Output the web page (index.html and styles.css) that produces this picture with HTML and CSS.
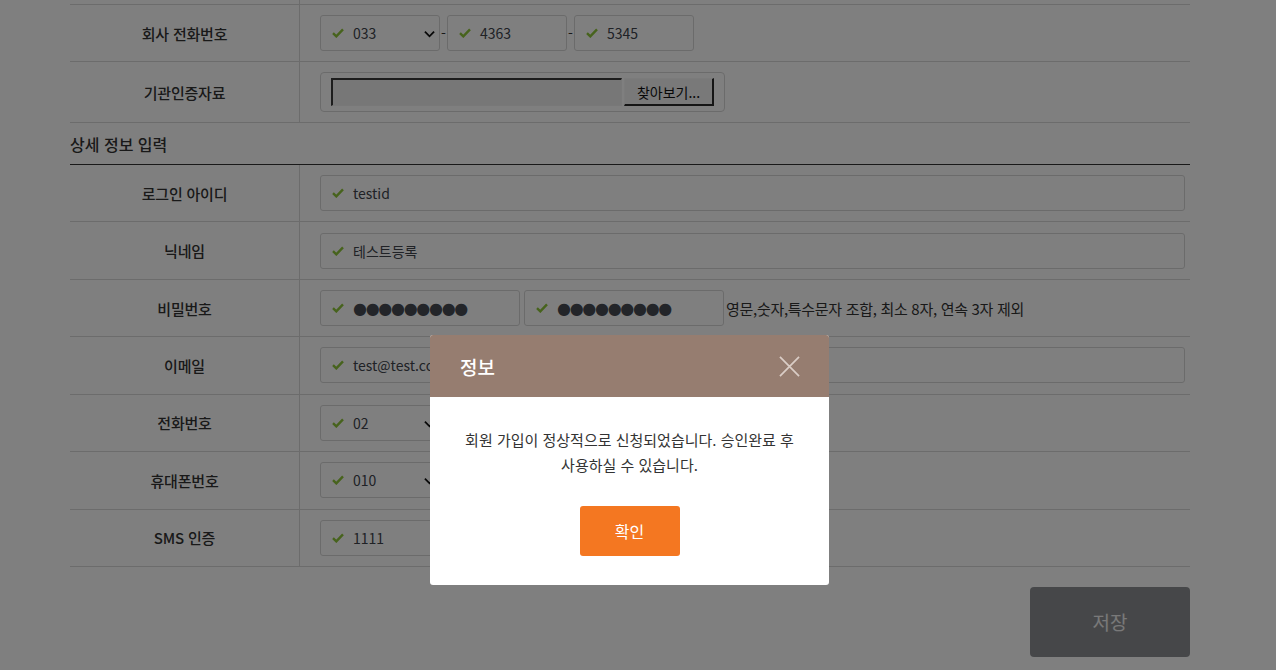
FILE: index.html
```html
<!DOCTYPE html>
<html lang="ko">
<head>
<meta charset="utf-8">
<title>회원가입</title>
<link rel="stylesheet" href="styles.css">
</head>
<body>
<div class="page">
  <div class="form">
    <div class="row row-top"><div class="label"></div><div class="cell"></div></div>

    <div class="row row-a">
      <div class="label">회사 전화번호</div>
      <div class="cell">
        <div class="field sel w120"><svg class="chk" viewBox="0 0 12 10"><path d="M1 5.2 L4.3 8.4 L11 1.4" /></svg><span>033</span><svg class="chev" viewBox="0 0 12 8"><path d="M1 1.5 L6 6.5 L11 1.5"/></svg></div>
        <span class="dash">-</span>
        <div class="field w120"><svg class="chk" viewBox="0 0 12 10"><path d="M1 5.2 L4.3 8.4 L11 1.4" /></svg><span>4363</span></div>
        <span class="dash">-</span>
        <div class="field w120"><svg class="chk" viewBox="0 0 12 10"><path d="M1 5.2 L4.3 8.4 L11 1.4" /></svg><span>5345</span></div>
      </div>
    </div>

    <div class="row row-file">
      <div class="label">기관인증자료</div>
      <div class="cell">
        <div class="filebox">
          <span class="filetext"></span>
          <span class="filebtn">찾아보기...</span>
        </div>
      </div>
    </div>

    <div class="section-title">상세 정보 입력</div>

    <div class="row">
      <div class="label">로그인 아이디</div>
      <div class="cell"><div class="field full"><svg class="chk" viewBox="0 0 12 10"><path d="M1 5.2 L4.3 8.4 L11 1.4" /></svg><span>testid</span></div></div>
    </div>
    <div class="row">
      <div class="label">닉네임</div>
      <div class="cell"><div class="field full"><svg class="chk" viewBox="0 0 12 10"><path d="M1 5.2 L4.3 8.4 L11 1.4" /></svg><span>테스트등록</span></div></div>
    </div>
    <div class="row">
      <div class="label">비밀번호</div>
      <div class="cell">
        <div class="field w200"><svg class="chk" viewBox="0 0 12 10"><path d="M1 5.2 L4.3 8.4 L11 1.4" /></svg><span class="dots">●●●●●●●●●</span></div>
        <div class="field w200 ml4"><svg class="chk" viewBox="0 0 12 10"><path d="M1 5.2 L4.3 8.4 L11 1.4" /></svg><span class="dots">●●●●●●●●●</span></div>
        <span class="hint">영문,숫자,특수문자 조합, 최소 8자, 연속 3자 제외</span>
      </div>
    </div>
    <div class="row">
      <div class="label">이메일</div>
      <div class="cell"><div class="field full"><svg class="chk" viewBox="0 0 12 10"><path d="M1 5.2 L4.3 8.4 L11 1.4" /></svg><span>test@test.com</span></div></div>
    </div>
    <div class="row">
      <div class="label">전화번호</div>
      <div class="cell">
        <div class="field sel w120"><svg class="chk" viewBox="0 0 12 10"><path d="M1 5.2 L4.3 8.4 L11 1.4" /></svg><span>02</span><svg class="chev" viewBox="0 0 12 8"><path d="M1 1.5 L6 6.5 L11 1.5"/></svg></div>
      </div>
    </div>
    <div class="row">
      <div class="label">휴대폰번호</div>
      <div class="cell">
        <div class="field sel w120"><svg class="chk" viewBox="0 0 12 10"><path d="M1 5.2 L4.3 8.4 L11 1.4" /></svg><span>010</span><svg class="chev" viewBox="0 0 12 8"><path d="M1 1.5 L6 6.5 L11 1.5"/></svg></div>
      </div>
    </div>
    <div class="row">
      <div class="label">SMS 인증</div>
      <div class="cell">
        <div class="field w200"><svg class="chk" viewBox="0 0 12 10"><path d="M1 5.2 L4.3 8.4 L11 1.4" /></svg><span>1111</span></div>
      </div>
    </div>
  </div>

  <div class="actions">
    <button class="save" type="button">저장</button>
  </div>
</div>

<div class="overlay"></div>

<div class="modal" role="dialog">
  <div class="modal-head">
    <span class="modal-title">정보</span>
    <svg class="close" viewBox="0 0 22 22"><path d="M1 1 L21 21 M21 1 L1 21"/></svg>
  </div>
  <div class="modal-body">
    <p class="msg">회원 가입이 정상적으로 신청되었습니다. 승인완료 후<br>사용하실 수 있습니다.</p>
    <button class="ok" type="button">확인</button>
  </div>
</div>
</body>
</html>
```

FILE: styles.css
```css
html, body {
  margin: 0;
  padding: 0;
  background: #ffffff;
  font-family: "Noto Sans CJK KR", "Noto Sans", sans-serif;
  color: #333333;
  overflow: hidden;
}

.page {
  width: 1120px;
  margin-left: 70px;
}

.row {
  display: grid;
  grid-template-columns: 230px 1fr;
  height: 57.43px;
  box-sizing: border-box;
  border-bottom: 1px solid #d8d8d8;
}

.row-top { height: 5px; }
.row-a { height: 57px; }
.row-file { height: 61px; }

.label {
  border-right: 1px solid #d8d8d8;
  display: flex;
  align-items: center;
  justify-content: center;
  font-size: 15px;
  font-weight: 500;
  color: #333;
  letter-spacing: -0.2px;
}

.cell {
  display: flex;
  align-items: center;
  padding: 0 5px 0 20px;
  min-width: 0;
}

.field {
  height: 36px;
  box-sizing: border-box;
  border: 1px solid #d6d6d6;
  border-radius: 3px;
  background: #fff;
  display: flex;
  align-items: center;
  padding-left: 11px;
  font-size: 14px;
  color: #40444c;
  position: relative;
  flex: none;
}

.field span { margin-left: 9px; }

.full { width: 100%; flex: 1; }
.w120 { width: 120px; }
.w200 { width: 200px; }
.ml4 { margin-left: 4px; }

.chk {
  width: 12px;
  height: 10px;
  fill: none;
  stroke: #8ec63a;
  stroke-width: 2.4;
  flex: none;
}

.chev {
  position: absolute;
  right: 4px;
  top: 14px;
  width: 11px;
  height: 8px;
  fill: none;
  stroke: #111;
  stroke-width: 2;
}

.dash {
  font-size: 14px;
  color: #333;
  width: 7px;
  text-align: center;
  flex: none;
}

.dots {
  font-family: "DejaVu Sans", sans-serif;
  font-size: 16px;
  letter-spacing: -1.3px;
  color: #464a52;
}

.hint {
  font-size: 15px;
  color: #333;
  margin-left: 2px;
  letter-spacing: -0.3px;
  white-space: nowrap;
}

.filebox {
  width: 405px;
  height: 40px;
  box-sizing: border-box;
  border: 1px solid #d6d6d6;
  border-radius: 4px;
  display: flex;
  align-items: center;
  padding-left: 10px;
}

.filetext {
  width: 291px;
  height: 28px;
  box-sizing: border-box;
  background: #efefef;
  border-top: 2px solid #3a3a3a;
  border-left: 2px solid #3a3a3a;
  border-bottom: 1px solid #f0f0f0;
  border-right: 1px solid #f0f0f0;
}

.filebtn {
  width: 90px;
  height: 28px;
  box-sizing: border-box;
  margin-left: 2px;
  background: #f2f2f2;
  border-top: 1px solid #f6f6f6;
  border-left: 1px solid #f6f6f6;
  border-bottom: 2px solid #2a2a2a;
  border-right: 2px solid #2a2a2a;
  font-size: 14px;
  color: #111;
  display: flex;
  align-items: center;
  justify-content: center;
}

.section-title {
  height: 42px;
  box-sizing: border-box;
  border-bottom: 1px solid #333;
  font-size: 16px;
  font-weight: 500;
  color: #333;
  display: flex;
  align-items: center;
  padding-top: 1px;
}

.actions {
  display: flex;
  justify-content: flex-end;
  margin-top: 20px;
}

.save {
  width: 160px;
  height: 70px;
  border: none;
  border-radius: 4px;
  background: #8d8f93;
  color: #f2f2f2;
  font-family: inherit;
  font-size: 19px;
}

.overlay {
  position: fixed;
  inset: 0;
  background: rgba(0, 0, 0, 0.5);
}

.modal {
  position: fixed;
  left: 430px;
  top: 335px;
  width: 399px;
  height: 250px;
  background: #fff;
  border-radius: 3px;
  overflow: hidden;
}

.modal-head {
  height: 62px;
  background: #967d70;
  display: flex;
  align-items: center;
  justify-content: space-between;
  padding: 0 29px 0 30px;
}

.modal-title {
  color: #fff;
  font-size: 19px;
  font-weight: 500;
}

.close {
  width: 21px;
  height: 21px;
  fill: none;
  stroke: #dacdc6;
  stroke-width: 1.8;
}

.modal-body {
  display: flex;
  flex-direction: column;
  align-items: center;
  padding-top: 30px;
}

.msg {
  margin: 0;
  font-size: 15px;
  line-height: 25px;
  color: #333;
  text-align: center;
}

.ok {
  margin-top: 29px;
  width: 100px;
  height: 50px;
  border: none;
  border-radius: 3px;
  background: #f47721;
  color: #fff;
  font-family: inherit;
  font-size: 16px;
}
```
